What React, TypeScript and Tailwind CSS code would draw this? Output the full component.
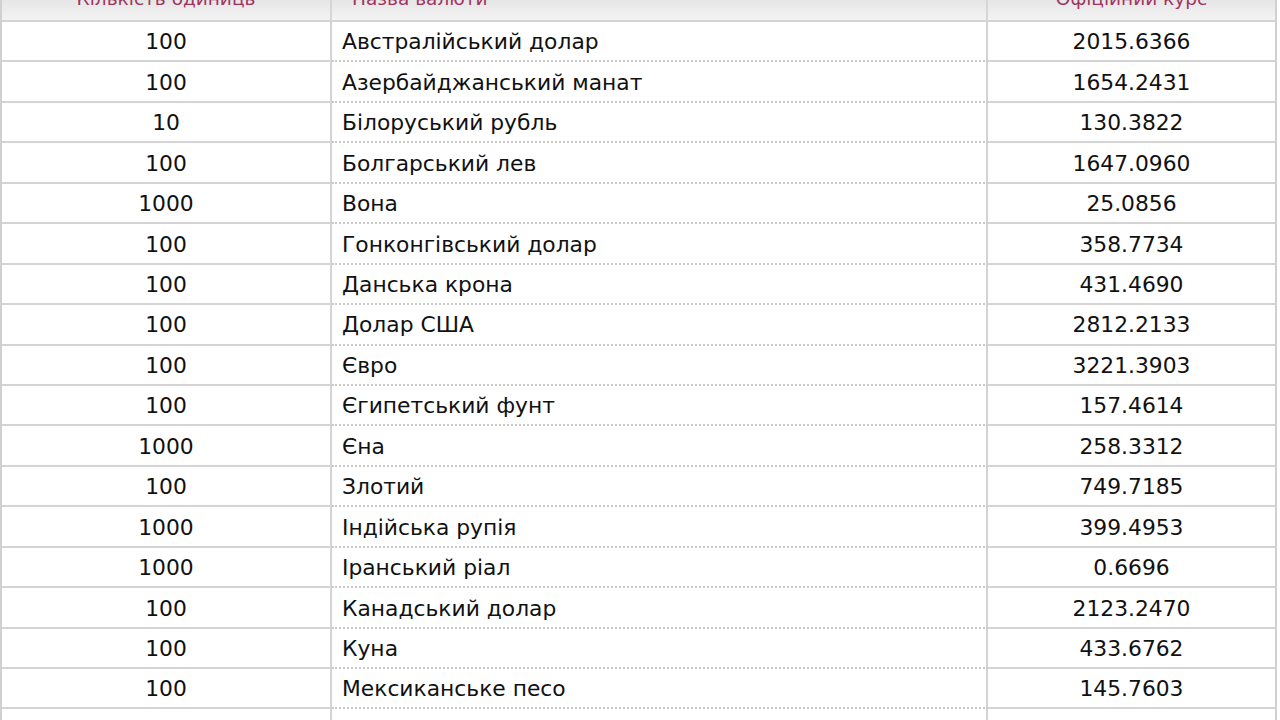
const rates: [string, string, string][] = [
  ['100', 'Австралійський долар', '2015.6366'],
  ['100', 'Азербайджанський манат', '1654.2431'],
  ['10', 'Білоруський рубль', '130.3822'],
  ['100', 'Болгарський лев', '1647.0960'],
  ['1000', 'Вона', '25.0856'],
  ['100', 'Гонконгівський долар', '358.7734'],
  ['100', 'Данська крона', '431.4690'],
  ['100', 'Долар США', '2812.2133'],
  ['100', 'Євро', '3221.3903'],
  ['100', 'Єгипетський фунт', '157.4614'],
  ['1000', 'Єна', '258.3312'],
  ['100', 'Злотий', '749.7185'],
  ['1000', 'Індійська рупія', '399.4953'],
  ['1000', 'Іранський ріал', '0.6696'],
  ['100', 'Канадський долар', '2123.2470'],
  ['100', 'Куна', '433.6762'],
  ['100', 'Мексиканське песо', '145.7603'],
  ['100', 'Молдовський лей', '158.2871'],
  ['100', 'Новий ізраїльський шекель', '780.4312'],
]

export default function App() {
  return (
    <div className="h-[720px] w-[1280px] overflow-hidden bg-white font-['DejaVu_Sans',Verdana,sans-serif] text-[21.8px] text-[#111]">
      <div className="w-[1277px] border-x-2 border-[#d0d0d0]">
        {/* header, scrolled mostly out of view */}
        <div className="flex h-[22px] overflow-hidden border-b-2 border-[#d4d4d4] bg-gradient-to-b from-[#e6e6e6] to-[#f3f3f3] text-[18.5px] text-[#a0345f]">
          <div className="w-[330px] shrink-0 border-r-2 border-[#d6d6d6] text-center">
            <div className="-mt-[13px] leading-6">Кількість одиниць</div>
          </div>
          <div className="w-[656px] shrink-0 border-r-2 border-[#d6d6d6] pl-[20px]">
            <div className="-mt-[13px] leading-6">Назва валюти</div>
          </div>
          <div className="flex-1 text-center">
            <div className="-mt-[13px] leading-6">Офіційний курс</div>
          </div>
        </div>

        {rates.map(([units, name, rate]) => (
          <div key={name} className="flex h-[40.45px]">
            <div className="flex w-[330px] shrink-0 items-center justify-center border-r-2 border-b-2 border-[#d4d4d4] pt-[3px]">
              {units}
            </div>
            <div className="flex w-[656px] shrink-0 items-center border-r-2 border-b-2 border-r-[#d4d4d4] border-b-[#c9c9c9] [border-bottom-style:dotted] pl-[10px] pt-[3px]">
              {name}
            </div>
            <div className="flex flex-1 items-center justify-center border-b-2 border-[#d4d4d4] pt-[3px]">
              {rate}
            </div>
          </div>
        ))}
      </div>
    </div>
  )
}
